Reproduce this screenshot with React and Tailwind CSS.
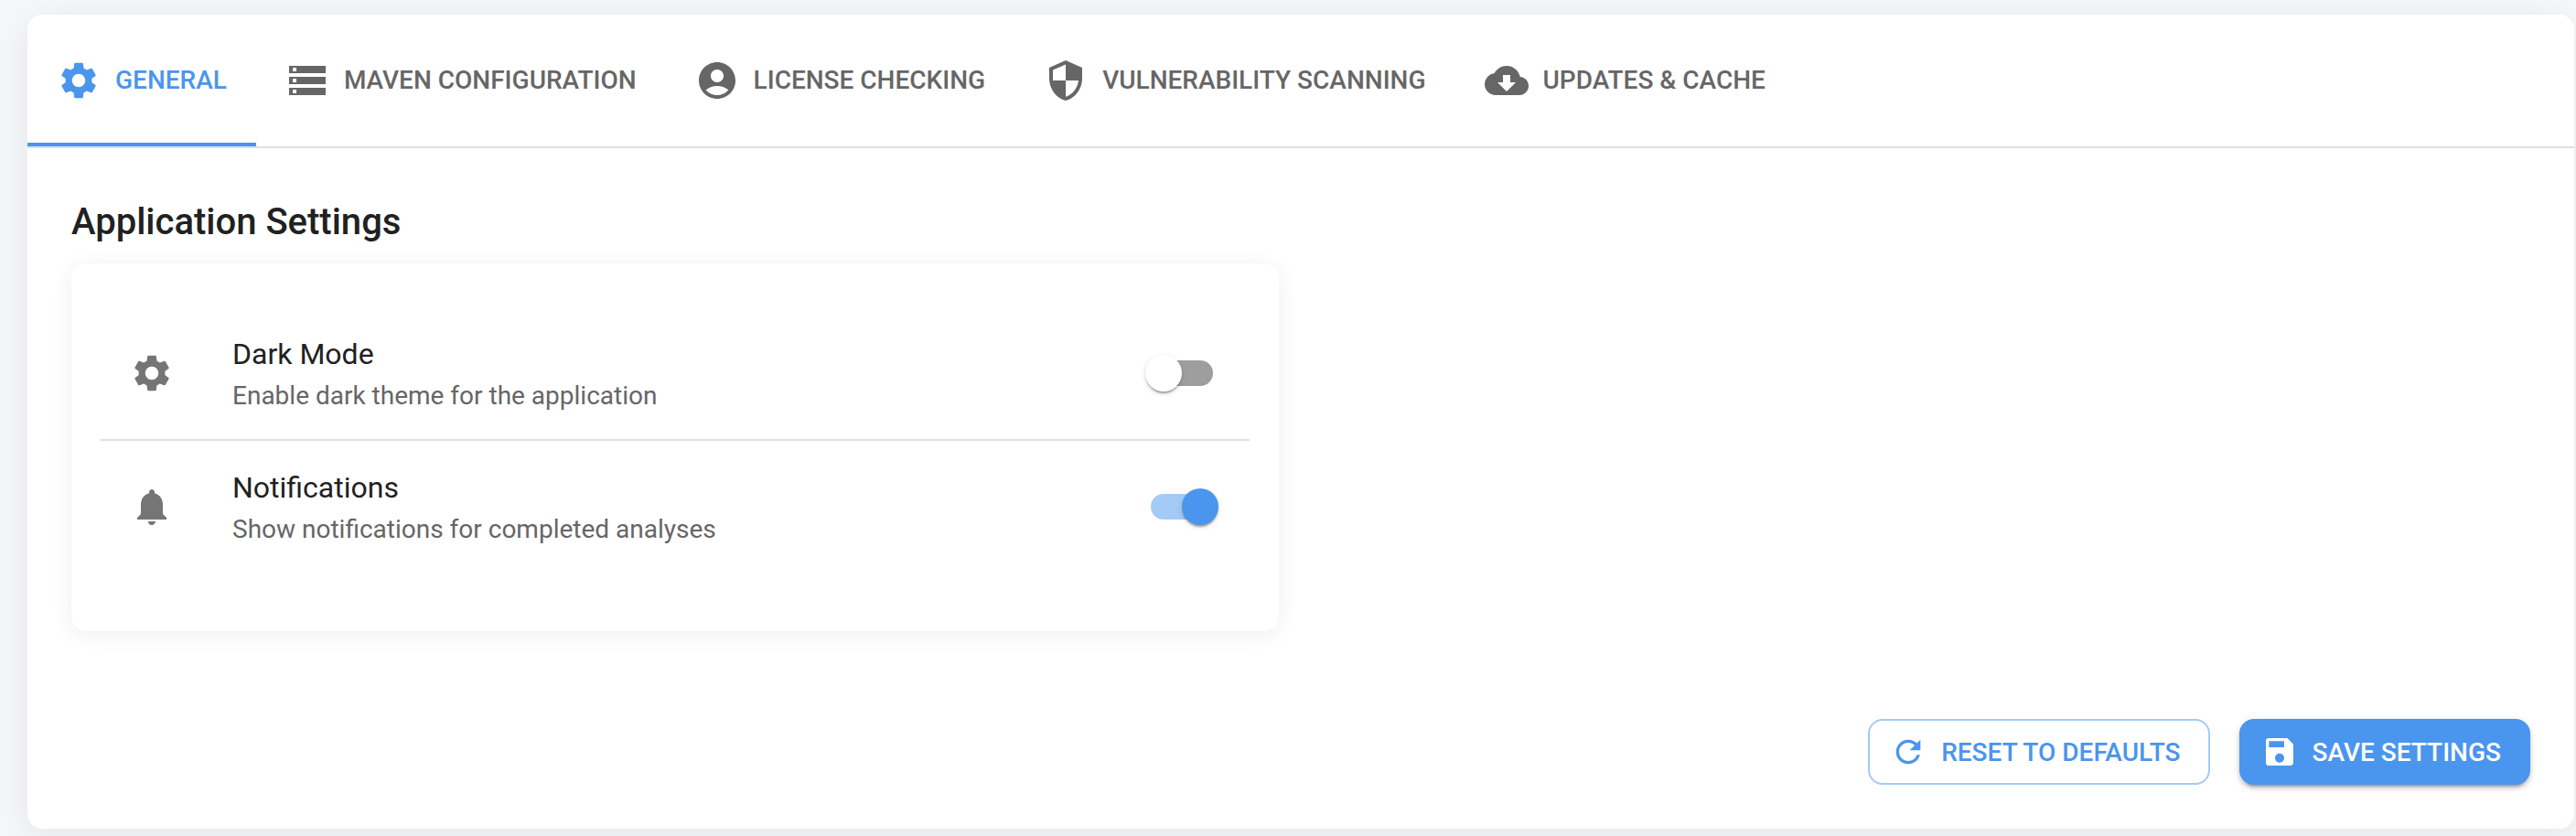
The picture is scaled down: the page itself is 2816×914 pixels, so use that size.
import {
  MdSettings,
  MdStorage,
  MdAccountCircle,
  MdSecurity,
  MdCloudDownload,
  MdNotifications,
  MdRefresh,
  MdSave,
} from "react-icons/md";
import clsx from "clsx";

const tabs = [
  { label: "General", Icon: MdSettings, active: true },
  { label: "Maven Configuration", Icon: MdStorage },
  { label: "License Checking", Icon: MdAccountCircle },
  { label: "Vulnerability Scanning", Icon: MdSecurity },
  { label: "Updates & Cache", Icon: MdCloudDownload },
];

const settings = [
  {
    title: "Dark Mode",
    description: "Enable dark theme for the application",
    Icon: MdSettings,
    on: false,
  },
  {
    title: "Notifications",
    description: "Show notifications for completed analyses",
    Icon: MdNotifications,
    on: true,
  },
];

function Tab({ label, Icon, active }) {
  return (
    <button
      role="tab"
      aria-selected={!!active}
      className={clsx(
        "flex h-36 shrink-0 items-center gap-4 border-b-4 px-8 pt-1 text-[28px] font-medium whitespace-nowrap uppercase",
        active ? "border-[#4a95ed] text-[#4a95ed]" : "border-transparent text-[#666666]",
      )}
    >
      <Icon className="size-12 shrink-0" />
      <span className="pb-px leading-[33px]">{label}</span>
    </button>
  );
}

function Switch({ on }) {
  return (
    <div role="switch" aria-checked={on} className="flex h-19 w-29 items-center p-6">
      <div
        className={clsx(
          "flex h-7 w-[68px] items-center rounded-full",
          on ? "justify-end bg-[#a4caf6]" : "justify-start bg-[#9e9e9e]",
        )}
      >
        <div
          className={clsx(
            "size-10 shrink-0 rounded-full shadow-[0_4px_2px_-2px_rgba(0,0,0,0.2),0_2px_2px_0_rgba(0,0,0,0.14),0_2px_6px_0_rgba(0,0,0,0.12)]",
            on ? "-mr-1.5 bg-[#4a95ed]" : "-ml-1.5 bg-white",
          )}
        />
      </div>
    </div>
  );
}

function SettingRow({ title, description, Icon, on }) {
  return (
    <li className="flex h-36 items-center pr-4 pl-8">
      <div className="w-28 shrink-0 text-[#757575]">
        <Icon className="size-12" />
      </div>
      <div className="flex-1">
        <div className="pb-0.5 text-[32px] leading-[46px] text-[#212121]">{title}</div>
        <div className="pt-0.5 pb-px text-[28px] leading-[37px] text-[#666666]">{description}</div>
      </div>
      <Switch on={on} />
    </li>
  );
}

export default function App() {
  return (
    <div className="h-[914px] w-[2816px] overflow-hidden bg-[#f5f7fb] pt-4 pr-0.5 pl-[30px] font-['Roboto',sans-serif] antialiased">
      <main className="flex h-[890px] flex-col rounded-2xl bg-white shadow-[0_8px_40px_0_rgba(0,0,0,0.08)]">
        <div role="tablist" className="flex border-b-2 border-[#e0e0e0]">
          {tabs.map((tab) => (
            <Tab key={tab.label} {...tab} />
          ))}
        </div>

        <div className="flex flex-1 flex-col justify-between p-12">
          <section>
            <h2 className="mb-3.5 pt-px text-[40px] leading-[63px] font-medium text-[#212121]">
              Application Settings
            </h2>
            <div className="w-[1320px] rounded-2xl bg-white px-8 pt-12 pb-16 shadow-[0_4px_24px_0_rgba(0,0,0,0.07)]">
              <ul>
                <SettingRow {...settings[0]} />
                <li aria-hidden="true" className="h-0.5 bg-[#e0e0e0]" />
                <SettingRow {...settings[1]} />
              </ul>
            </div>
          </section>

          <div className="flex justify-end gap-8">
            <button className="flex h-18 items-center gap-4 rounded-2xl border-2 border-[#a4caf6] pr-[30px] pl-[22px] text-[28px] font-medium text-[#4a95ed] uppercase">
              <MdRefresh className="size-10" />
              <span className="pt-px leading-[33px]">Reset to Defaults</span>
            </button>
            <button className="flex h-18 items-center gap-4 rounded-2xl bg-[#4a95ed] pr-8 pl-6 text-[28px] font-medium text-white uppercase shadow-[0_6px_2px_-4px_rgba(0,0,0,0.2),0_4px_4px_0_rgba(0,0,0,0.14),0_2px_10px_0_rgba(0,0,0,0.12)]">
              <MdSave className="size-10" />
              <span className="pt-px leading-[33px]">Save Settings</span>
            </button>
          </div>
        </div>
      </main>
    </div>
  );
}
